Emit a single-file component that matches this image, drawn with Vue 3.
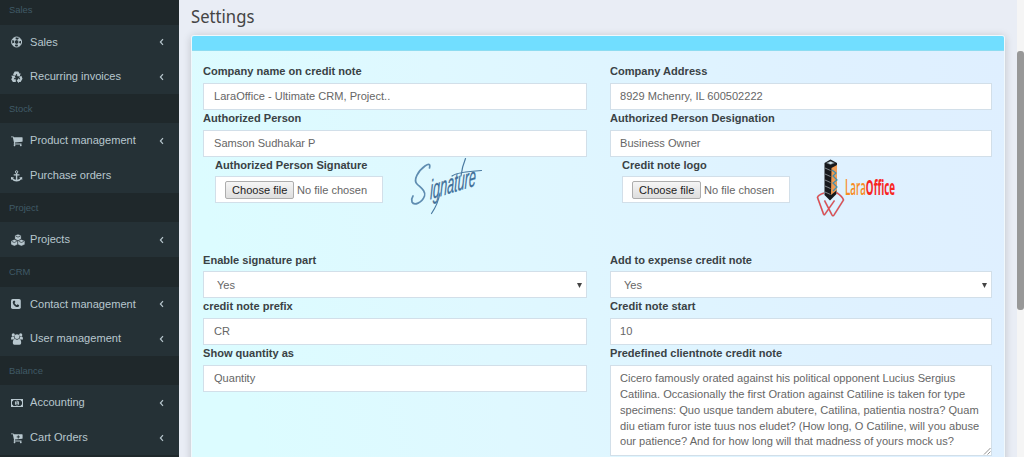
<script setup>
const menu = [
  { header: 'Sales' },
  { label: 'Sales', icon: 'ring', arrow: true },
  { label: 'Recurring invoices', icon: 'recycle', arrow: true },
  { header: 'Stock' },
  { label: 'Product management', icon: 'cart', arrow: true },
  { label: 'Purchase orders', icon: 'anchor' },
  { header: 'Project' },
  { label: 'Projects', icon: 'cubes', arrow: true },
  { header: 'CRM' },
  { label: 'Contact management', icon: 'phone', arrow: true },
  { label: 'User management', icon: 'users', arrow: true },
  { header: 'Balance' },
  { label: 'Accounting', icon: 'money', arrow: true },
  { label: 'Cart Orders', icon: 'cartplus', arrow: true },
  { header: '' }
]
const note = [
  'Cicero famously orated against his political opponent Lucius Sergius',
  'Catilina. Occasionally the first Oration against Catiline is taken for type',
  'specimens: Quo usque tandem abutere, Catilina, patientia nostra? Quam',
  'diu etiam furor iste tuus nos eludet? (How long, O Catiline, will you abuse',
  'our patience? And for how long will that madness of yours mock us?'
]
const rows = [
  [
    { label: 'Company name on credit note', value: 'LaraOffice - Ultimate CRM, Project..' },
    { label: 'Company Address', value: '8929 Mchenry, IL 600502222' }
  ],
  [
    { label: 'Authorized Person', value: 'Samson Sudhakar P' },
    { label: 'Authorized Person Designation', value: 'Business Owner' }
  ],
  [
    { label: 'Authorized Person Signature', type: 'file', image: 'signature' },
    { label: 'Credit note logo', type: 'file', image: 'logo' }
  ],
  [
    { label: 'Enable signature part', value: 'Yes', type: 'select' },
    { label: 'Add to expense credit note', value: 'Yes', type: 'select' }
  ],
  [
    { label: 'credit note prefix', value: 'CR' },
    { label: 'Credit note start', value: '10' }
  ],
  [
    { label: 'Show quantity as', value: 'Quantity' },
    { label: 'Predefined clientnote credit note', type: 'area' }
  ]
]
const fields = rows.flat()
</script>

<template>
  <div class="page">
    <aside class="sidebar">
      <template v-for="(m, i) in menu" :key="i">
        <div v-if="'header' in m" class="head"><span class="t">{{ m.header }}</span></div>
        <a v-else class="item">
          <svg class="icon" viewBox="0 0 14 12">
            <g v-if="m.icon === 'ring'" fill="none" stroke="currentColor">
              <circle cx="5.6" cy="6" r="5" stroke-width="1" />
              <circle cx="5.6" cy="6" r="2.3" stroke-width=".8" />
              <circle cx="5.6" cy="6" r="3.6" stroke-width="2.6" stroke-dasharray="2.8 2.855" stroke-dashoffset="-1.4" />
            </g>
            <g v-else-if="m.icon === 'recycle'">
              <path d="M3.7.6h3.600l1.400 2.200 1-.5-1 3.100-3.300-.5 1.100-.7-1-1.500-1.300 2.200-2.200-1.300z" />
              <path d="M.2 4.700l3.200-.3 1.300 2.900-1.100-.5-1 1.500h2.200v2.800H1.900L.2 8.300l1.100-1.900z" />
              <path d="M8.200 6.100l2.200-1.300 1.100 2.900-1.900 3.400H8v1.100L5.600 9.700l2.400-2.600v1.200h1.300z" />
            </g>
            <path v-else-if="m.icon === 'cart'" transform="translate(-.5 -.4) scale(.007)" d="M704 1536q0 52-38 90t-90 38-90-38-38-90 38-90 90-38 90 38 38 90zm896 0q0 52-38 90t-90 38-90-38-38-90 38-90 90-38 90 38 38 90zm128-1088v512q0 24-16.5 42.5t-40.5 21.5l-1044 122q13 60 13 70 0 16-24 64h920q26 0 45 19t19 45-19 45-45 19h-1024q-26 0-45-19t-19-45q0-11 8-31.5t16-36 21.5-40 15.5-29.5l-177-823h-204q-26 0-45-19t-19-45 19-45 45-19h256q16 0 28.5 6.5t19.5 15.5 13 24.5 8 26 5.5 29.5 4.5 26h1201q26 0 45 19t19 45z" />
            <g v-else-if="m.icon === 'anchor'">
              <circle cx="5.6" cy="1.9" r="1.200" fill="none" stroke="currentColor" stroke-width="1" />
              <path d="M4.900 3h1.400v1.200h2.200v1.400H6.300v4.100q2-.2 2.800-1.200L8.200 7.600l3-.6v3l-.9-.7Q8.700 11.500 5.600 11.600 2.500 11.500.9 9.300L0 10V7l3 .6-.9.900q.8 1 2.800 1.200V5.600H2.700V4.200h2.200z" />
            </g>
            <g v-else-if="m.icon === 'cubes'" stroke="#253136" stroke-width=".3">
              <path d="M3.900 1.600L7 .3l3.100 1.300v3.500L7 6.600 3.900 5.100z" />
              <path d="M0 6.900l3.300-1.500 3.300 1.500v3.500l-3.300 1.500L0 10.400z" />
              <path d="M7 6.900l3.300-1.500 3.500 1.500v3.500l-3.500 1.500L7 10.400z" />
              <path d="M4.700 2.100L7 3.100l2.300-1M.8 7.400l2.500 1.100 2.400-1.100M7.900 7.400l2.400 1.100 2.600-1.100" fill="none" stroke-width=".7" />
            </g>
            <g v-else-if="m.icon === 'phone'">
              <rect x="0" y="1" width="9.800" height="10" rx="1.700" />
              <path d="M2.300 2.900q1-1 1.600.1l.5 1.100-.9.9q.7 1.500 2.200 2.200l.9-.9 1.200.6q.9.600-.1 1.600-1.300 1.300-3.600-.3Q2.200 6.700 1.800 5q-.3-1.300.5-2.100z" fill="#253136" />
            </g>
            <g v-else-if="m.icon === 'users'">
              <circle cx="2.300" cy="1.900" r="1.600" /><circle cx="9.700" cy="1.900" r="1.600" />
              <circle cx="6" cy="3.700" r="2.400" />
              <path d="M0 6.600Q0 3.100 1.400 3.500 2.500 4.100 3.200 3.800q-.2 1.800.8 2.800H0zM12 6.600q0-3.500-1.400-3.100-1.100.6-1.800.3.200 1.800-.8 2.800z" />
              <path d="M1.800 10q0-4 2.400-4.100Q6 7.400 7.800 5.900q2.400.1 2.400 4.100 0 1.700-1.600 1.700H3.400Q1.800 11.700 1.800 10z" />
            </g>
            <g v-else-if="m.icon === 'money'">
              <path fill-rule="evenodd" d="M0 2h12v8H0zM2.400 3Q2.300 4.300 1 4.400V7.600Q2.300 7.700 2.400 9H9.600Q9.700 7.700 11 7.600V4.400Q9.700 4.300 9.600 3z" />
              <ellipse cx="6" cy="6" rx="2.100" ry="2.600" />
              <path d="M5.200 4.900l.8-.6v3.100M5.100 7.500h1.900" fill="none" stroke="#253136" stroke-width=".65" />
            </g>
            <g v-else>
              <path transform="translate(-.5 -.4) scale(.007)" d="M704 1536q0 52-38 90t-90 38-90-38-38-90 38-90 90-38 90 38 38 90zm896 0q0 52-38 90t-90 38-90-38-38-90 38-90 90-38 90 38 38 90zm128-1088v512q0 24-16.5 42.5t-40.5 21.5l-1044 122q13 60 13 70 0 16-24 64h920q26 0 45 19t19 45-19 45-45 19h-1024q-26 0-45-19t-19-45q0-11 8-31.5t16-36 21.5-40 15.5-29.5l-177-823h-204q-26 0-45-19t-19-45 19-45 45-19h256q16 0 28.5 6.5t19.5 15.5 13 24.5 8 26 5.5 29.5 4.5 26h1201q26 0 45 19t19 45z" />
              <path d="M7.300 3.300v3.200M5.700 4.900h3.200" stroke="#253136" stroke-width=".9" />
            </g>
          </svg>
          <span class="name"><span class="t">{{ m.label }}</span></span>
          <svg v-if="m.arrow" class="arrow" viewBox="0 0 5 8"><path d="M4 1.200L1.400 4 4 6.800" fill="none" stroke="currentColor" stroke-width="1.200" /></svg>
        </a>
      </template>
    </aside>

    <main class="main">
      <h1><span class="t">Settings</span></h1>
      <section class="panel">
        <div class="bar"></div>
        <div class="grid">
          <div v-for="f in fields" :key="f.label" class="field" :class="f.type">
            <div class="group">
              <label><span class="t">{{ f.label }}</span></label>
              <div v-if="f.type === 'file'" class="control upload">
                <span class="choose"><span class="t">Choose file</span></span>
                <span class="t">No file chosen</span>
              </div>
              <div v-else-if="f.type === 'area'" class="control area-box">
                <div v-for="line in note" :key="line"><span class="t">{{ line }}</span></div>
                <svg class="grip" viewBox="0 0 8 8"><path d="M1 7.500L7.500 1M4.500 7.500l3-3" stroke="#777" stroke-width=".8" /></svg>
              </div>
              <div v-else class="control">
                <span class="t">{{ f.value }}</span>
                <svg v-if="f.type === 'select'" class="caret" viewBox="0 0 5 5"><path d="M0 0h5L2.500 5z" /></svg>
              </div>
            </div>

            <svg v-if="f.image === 'signature'" class="picture sig" viewBox="0 0 100 75">
              <path d="M29.500 18Q31 12 25 16C18 21 13 30 17 34C21 38 26 41 24.500 46C22 53 14 56 12 52Q11 49 13 46" fill="none" stroke="#5f8db1" stroke-width="1.700" stroke-linecap="round" />
              <text transform="translate(30 49.500) rotate(-17) skewX(-18)" x="0" y="0" font-size="26" textLength="48" lengthAdjust="spacingAndGlyphs" fill="#3f6f99" stroke="#3f6f99" stroke-width=".25" font-family="Liberation Sans" font-style="italic">ignature</text>
              <path d="M40 43Q38 54 31.500 63.500M52 26Q57 22 81.500 20.500M65.500 8.500Q62 17 61 26" fill="none" stroke="#4a7aa1" stroke-width="1.200" stroke-linecap="round" />
            </svg>
            <svg v-if="f.image === 'logo'" class="picture logo" viewBox="0 0 110 75">
              <path d="M24.500 13l6-3.500 6.500 3.500-.5 31-6.500 6.500-5.500-5.500z" fill="#17191d" />
              <path d="M31.500 18l5.500-3v25l-6 5z" fill="#ee9b54" />
              <path d="M32 20l4 3-3 3 4 4-4 3 4 4-4 4" fill="none" stroke="#3e8fae" stroke-width="1.200" />
              <path d="M25 18l5.500 2.500M25 24l5.500 2.500M25 30l5.500 2.500M25 36l5.500 2.500M25 42l5.500 2.500" stroke="#9aa1a6" stroke-width=".8" />
              <path d="M26.500 13l4-1.800 4 1.800-4 1.500z" fill="#d2e3eb" stroke="#555c61" stroke-width=".5" />
              <path d="M24 43q-6 2-6.500 4.500L23.500 64q.7 1.500 1.600 0L34.500 50.500M36.500 42.500q6 4 7 7.500L34 65q-1 1.500-2 0L24.500 50.500" fill="none" stroke="#4b4248" stroke-opacity=".3" stroke-width="1.900" stroke-linejoin="round" />
              <path d="M24 43q-6 2-6.500 4.500L23.500 64q.7 1.500 1.600 0L34.500 50.500M36.500 42.500q6 4 7 7.500L34 65q-1 1.500-2 0L24.500 50.500" fill="none" stroke="#e6474c" stroke-width="1.300" stroke-linejoin="round" />
              <text x="45" y="45" textLength="50" lengthAdjust="spacingAndGlyphs" font-family="Open Sans" font-size="22" font-weight="600" fill="#f98c1e">Lara<tspan font-weight="700" fill="#f8261f">Office</tspan></text>
            </svg>
          </div>
        </div>
      </section>
    </main>

    <div class="scroll"><div class="thumb"></div></div>
  </div>
</template>

<style>
html, body { margin: 0; overflow: hidden; }
</style>

<style scoped>
* { box-sizing: border-box; }
.page {
  display: flex;
  width: 1024px;
  height: 457px;
  overflow: hidden;
  background: #e9edf5;
  font: 11.500px/15.600px "Liberation Sans", Arial, sans-serif;
  color: #666;
}
.t { display: inline-block; white-space: nowrap; transform: scaleX(.962); transform-origin: 0 50%; }
.sidebar { width: 179px; height: 457px; overflow: hidden; flex: none; background: #253136; }
.head {
  height: 29.600px;
  line-height: 30px;
  padding-left: 9px;
  font-size: 9.800px;
  background: #1f282b;
  color: #3f5a66;
}
.head:first-child { margin-top: -5px; }
.item { display: flex; align-items: center; height: 34.650px; padding: 1px 15px 0 11px; color: #b8c7ce; }
.icon { width: 14px; height: 12px; fill: currentColor; }
.name { flex: 1; margin-left: 5px; }
.arrow { width: 5px; height: 8px; }
.main { width: 838px; flex: none; padding-left: 12px; }
h1 {
  margin: 0;
  height: 35px;
  line-height: 32px;
  font-family: "Noto Sans", sans-serif;
  font-size: 18px;
  font-weight: 400;
  color: #444;
}
h1 .t { transform: scaleX(.925); }
.panel {
  width: 814px;
  height: 560px;
  margin-left: -.5px;
  border: 1px solid #f0f8fc;
  border-radius: 3px;
  background: linear-gradient(78deg, #dcfcff 10%, #dff8ff 38%, #dff1ff 80%, #dfefff);
  box-shadow: 0 1px 8px rgba(0, 0, 0, .18);
}
.bar { height: 15px; background: #71deff; border-radius: 2px 2px 0 0; border-bottom: 1px solid #8ddcf1; }
.grid { display: grid; grid-template-columns: 383.500px 382.500px; column-gap: 23px; padding: 12.300px 11.500px; }
.field { display: flex; height: 46.700px; min-width: 0; }
.group { flex: 1; min-width: 0; }
label { display: block; height: 19.700px; line-height: 16px; font-weight: 700; color: #3a4245; white-space: nowrap; }
.control {
  display: flex;
  align-items: center;
  height: 27px;
  padding: 1px 9.500px 0;
  background: #fff;
  border: 1px solid #d2dfe9;
  white-space: nowrap;
}
.select .control { padding: 1px 4px 0 13px; justify-content: space-between; }
.caret { width: 5px; height: 5px; fill: #444; }
.file { height: 95px; padding-left: 12px; }
.file .group { flex: none; width: 168px; }
.upload { gap: 3px; padding: 1px 0 0 9px; }
.choose {
  flex: none;
  height: 18px;
  line-height: 16px;
  width: 69px;
  padding-left: 6px;
  border: 1px solid #adadad;
  border-radius: 2px;
  background: linear-gradient(#f5f5f5, #dedede);
  color: #222;
}
.picture { margin-top: -6.500px; flex: none; overflow: visible; }
.sig { width: 100px; height: 75px; margin-left: 17px; }
.logo { width: 110px; height: 75px; margin-left: 10px; }
.area-box { position: relative; display: block; height: 91px; padding-top: 5.500px; line-height: 15.800px; }
.area-box .t { vertical-align: top; transform: scaleX(.964); }
.grip { position: absolute; right: 0; bottom: 0; width: 8px; height: 8px; }
.scroll { width: 7px; height: 457px; padding-top: 51px; background: #f5f5f5; }
.thumb { height: 259px; border-radius: 3px; background: #989898; }
</style>
